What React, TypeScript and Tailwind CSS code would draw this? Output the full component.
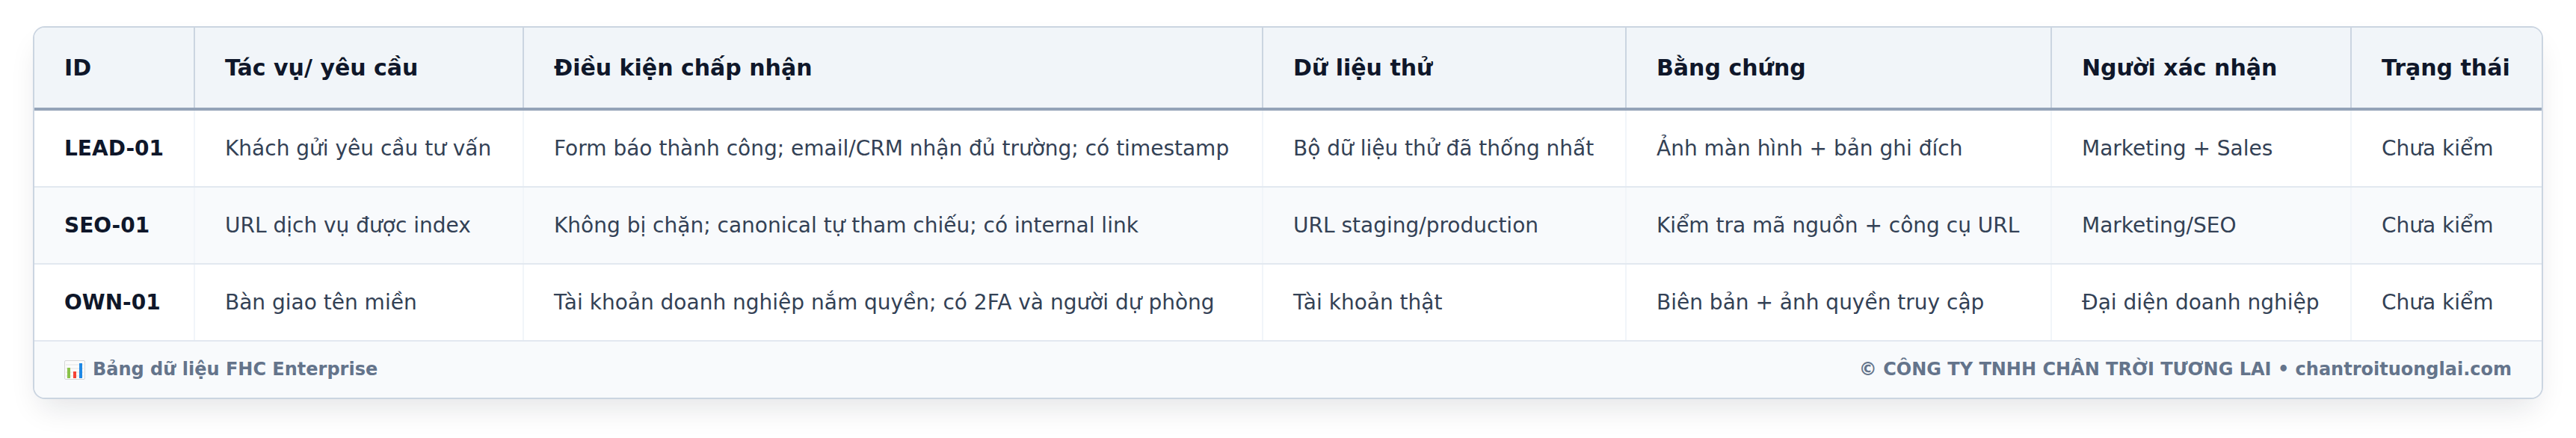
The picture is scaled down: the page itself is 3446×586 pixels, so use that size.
import React from "react";

type Row = {
  id: string;
  task: string;
  criteria: string;
  data: string;
  evidence: string;
  owner: string;
  status: string;
};

const headers = [
  "ID",
  "Tác vụ/ yêu cầu",
  "Điều kiện chấp nhận",
  "Dữ liệu thử",
  "Bằng chứng",
  "Người xác nhận",
  "Trạng thái",
];

const rows: Row[] = [
  {
    id: "LEAD-01",
    task: "Khách gửi yêu cầu tư vấn",
    criteria: "Form báo thành công; email/CRM nhận đủ trường; có timestamp",
    data: "Bộ dữ liệu thử đã thống nhất",
    evidence: "Ảnh màn hình + bản ghi đích",
    owner: "Marketing + Sales",
    status: "Chưa kiểm",
  },
  {
    id: "SEO-01",
    task: "URL dịch vụ được index",
    criteria: "Không bị chặn; canonical tự tham chiếu; có internal link",
    data: "URL staging/production",
    evidence: "Kiểm tra mã nguồn + công cụ URL",
    owner: "Marketing/SEO",
    status: "Chưa kiểm",
  },
  {
    id: "OWN-01",
    task: "Bàn giao tên miền",
    criteria: "Tài khoản doanh nghiệp nắm quyền; có 2FA và người dự phòng",
    data: "Tài khoản thật",
    evidence: "Biên bản + ảnh quyền truy cập",
    owner: "Đại diện doanh nghiệp",
    status: "Chưa kiểm",
  },
];

const gridCols =
  "grid grid-cols-[215px_440px_989px_486px_569px_401px_minmax(0,1fr)]";

// bar chart emoji drawn by hand
const ChartIcon: React.FC = () => (
  <svg width="28" height="26" viewBox="0 0 28 26" className="shrink-0">
    <rect x="0.5" y="0.5" width="27" height="25" rx="1.5" fill="#fbfbfb" stroke="#d6d6d6" />
    <g stroke="#e3e3e3" strokeWidth="1">
      <line x1="2" y1="6" x2="26" y2="6" />
      <line x1="2" y1="11" x2="26" y2="11" />
      <line x1="2" y1="16" x2="26" y2="16" />
      <line x1="2" y1="21" x2="26" y2="21" />
    </g>
    <rect x="4" y="10" width="4" height="14" fill="#8bc34a" />
    <rect x="12" y="15" width="4" height="9" fill="#f44336" />
    <rect x="20" y="4" width="4" height="20" fill="#1e88e5" />
  </svg>
);

const App: React.FC = () => {
  return (
    <div className="min-h-screen w-full bg-white pt-[35px] px-[44px] font-['DejaVu_Sans',sans-serif]">
      <div className="overflow-hidden rounded-[16px] border-2 border-[#cbd5e1] bg-white shadow-[0_20px_40px_-10px_rgba(15,23,42,0.12)]">
        {/* Header */}
        <div className={`${gridCols} bg-[#f1f5f9] border-b-4 border-[#94a3b8]`}>
          {headers.map((h, i) => (
            <div
              key={h}
              className={`px-10 py-[30px] text-[30px] leading-[47px] font-bold text-[#0f172a] whitespace-nowrap overflow-hidden ${
                i < headers.length - 1 ? "border-r-2 border-[#cbd5e1]" : ""
              }`}
            >
              {h}
            </div>
          ))}
        </div>

        {/* Body */}
        {rows.map((r, ri) => {
          const cells = [r.id, r.task, r.criteria, r.data, r.evidence, r.owner, r.status];
          return (
            <div
              key={r.id}
              className={`${gridCols} border-b-2 border-[#e2e8f0] ${
                ri % 2 === 1 ? "bg-[#f8fafc]" : "bg-white"
              }`}
            >
              {cells.map((c, ci) => (
                <div
                  key={ci}
                  className={`px-10 py-[28px] text-[28px] leading-[45px] whitespace-nowrap overflow-hidden ${
                    ci === 0 ? "font-bold text-[#0f172a]" : "text-[#334155]"
                  } ${ci < cells.length - 1 ? "border-r-2 border-[#f1f5f9]" : ""}`}
                >
                  {c}
                </div>
              ))}
            </div>
          );
        })}

        {/* Footer */}
        <div className="flex items-center justify-between bg-[#f8fafc] px-10 py-[19px] text-[24px] leading-[37px] font-bold text-[#64748b]">
          <div className="flex items-center gap-[10px]">
            <ChartIcon />
            <span>Bảng dữ liệu FHC Enterprise</span>
          </div>
          <span>© CÔNG TY TNHH CHÂN TRỜI TƯƠNG LAI • chantroituonglai.com</span>
        </div>
      </div>
    </div>
  );
};

export default App;
